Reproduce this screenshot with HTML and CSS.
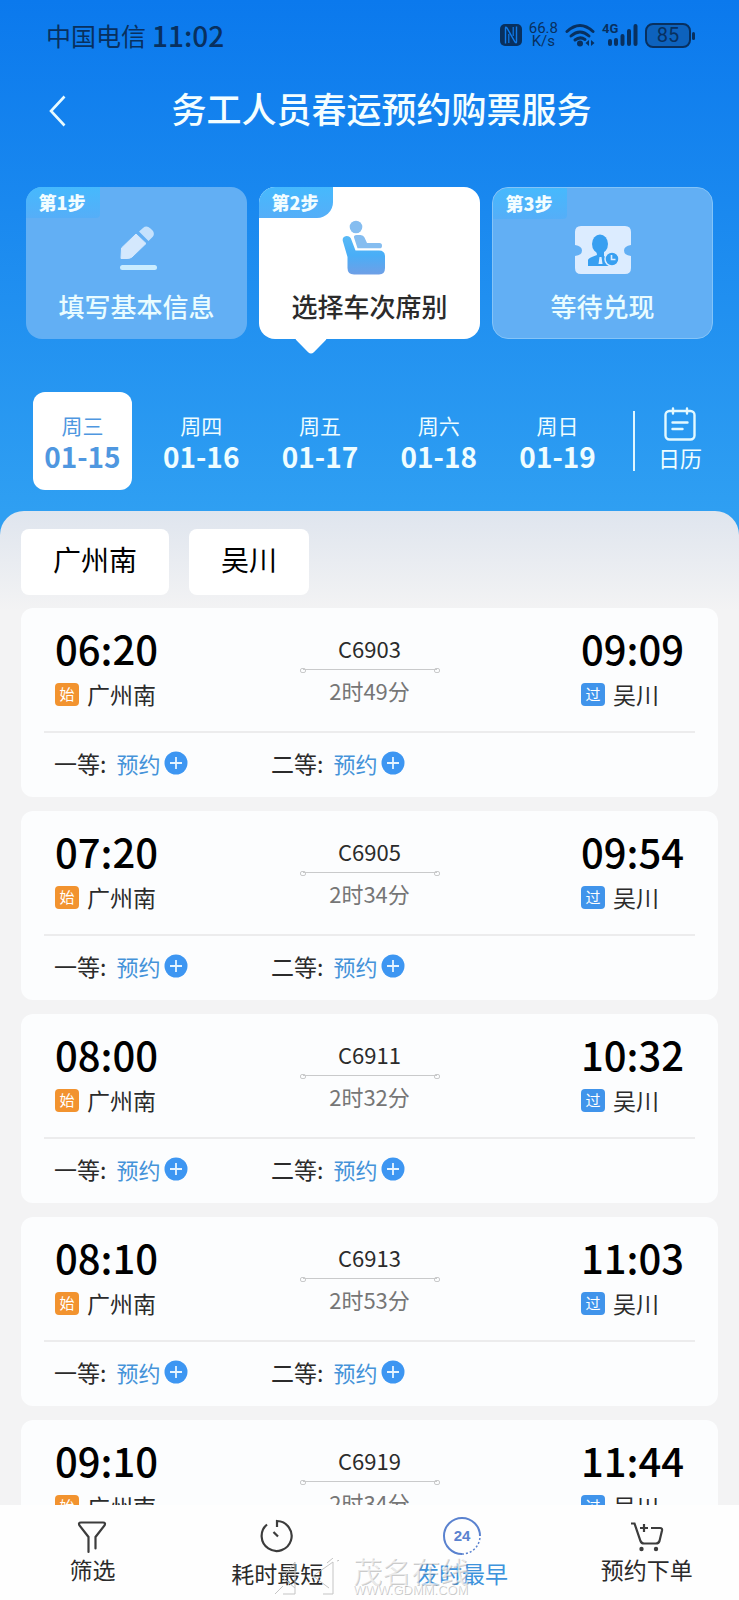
FILE: index.html
```html
<!DOCTYPE html>
<html lang="zh-CN">
<head>
<meta charset="UTF-8">
<meta name="viewport" content="width=device-width, initial-scale=1.0">
<title>务工人员春运预约购票服务</title>
<link rel="stylesheet" href="styles.css">
</head>
<body>
<header class="top">
    <div class="status-bar">
        <div class="status-left">
            <span class="carrier">中国电信</span>
            <span class="clock">11:02</span>
        </div>
        <div class="status-right">
            <svg width="22" height="22" viewBox="0 0 22 22">
                <rect x="0" y="0" width="22" height="22" rx="5" fill="#08305f"/>
                <path d="M5.500 19.500V4Q5.500 2.500 7 4L15 18Q16.500 19.500 16.500 18V2.500" fill="none" stroke="#0f7bec" stroke-width="1.400"/>
                <path d="M8.800 10V19M13.200 3V12" fill="none" stroke="#0f7bec" stroke-width="1.200"/>
            </svg>
            <div class="speed"><span>66.8</span><span>K/s</span></div>
            <svg width="30" height="24" viewBox="0 0 30 24">
                <g fill="none" stroke="#08305f" stroke-width="3" stroke-linecap="round">
                    <path d="M2 8.500Q15 -3.500 28 8.500"/>
                    <path d="M6 13Q15 5 24 13"/>
                    <path d="M10 17Q15 13 20 16.500"/>
                </g>
                <circle cx="15" cy="20.500" r="3" fill="#08305f"/>
                <path d="M24 17v6l-3.500-3zM26 17v6l3.500-3z" fill="#08305f"/>
            </svg>
            <div class="signal">
                <span class="net">4G</span>
                <svg width="36" height="24" viewBox="0 0 36 24">
                    <path d="M8 18v3M14 17v4M20.500 13v8M27 8v13M33.500 3v18" fill="none" stroke="#08305f" stroke-width="4" stroke-linecap="round"/>
                </svg>
            </div>
            <div class="battery"><span>85</span></div>
        </div>
    </div>

    <div class="title-bar">
        <a href="#" class="back" aria-label="返回">
            <svg width="18" height="32" viewBox="0 0 18 32"><path d="M16.500 1.500L3 16L16.500 30.500" fill="none" stroke="#e8fbff" stroke-width="2.600"/></svg>
        </a>
        <h1>务工人员春运预约购票服务</h1>
    </div>

    <div class="steps">
        <div class="step">
            <span class="step-tag">第1步</span>
            <svg width="60" height="54" viewBox="0 0 60 54">
                <path d="M14 35.500L14.500 25L29 11L39 20.500L25 34Q23 35.500 20 35.500Z" fill="#d4e8fd" stroke="#d4e8fd" stroke-linejoin="round"/>
                <path d="M32 8.500L36 5Q39.500 2 43.500 5.500Q48.500 9.500 46 13.500L41.500 18Z" fill="#c5e2fd"/>
                <rect x="13" y="42" width="37" height="5" rx="2.500" fill="#c9ecff"/>
            </svg>
            <span class="step-name">填写基本信息</span>
        </div>
        <div class="step active">
            <span class="step-tag">第2步</span>
            <svg class="seat-icon" width="60" height="54" viewBox="0 0 60 54">
                <defs>
                    <linearGradient id="seat" x1="0" y1="0" x2="0" y2="1">
                        <stop offset="0" stop-color="#58b9f6"/>
                        <stop offset=".5" stop-color="#49aef7"/>
                        <stop offset="1" stop-color="#6f9fe6"/>
                    </linearGradient>
                </defs>
                <circle cx="16" cy="4" r="6.300" fill="#85bdf0"/>
                <path d="M14 14.500Q13.500 12 16.500 12H20.500Q23.500 12 24.500 14.500L27 20H39.500Q42 20 42 22.700Q42 25.300 39.500 25.300H17.500Z" fill="#85bdf0"/>
                <path d="M2.800 18Q2 13.500 6.500 13Q10.500 13 11.500 17L15.500 27.500H39Q45 27.500 45 33.500V45Q45 51.500 39 51.500H14Q7.500 51.500 7.500 45V34Z" fill="url(#seat)"/>
            </svg>
            <span class="step-name">选择车次席别</span>
        </div>
        <div class="step outlined">
            <span class="step-tag">第3步</span>
            <svg width="60" height="54" viewBox="0 0 60 54">
                <path d="M8 3H52Q58 3 58 9V22Q51 23 51 27.500Q51 32 58 33V45Q58 51 52 51H8Q2 51 2 45V33Q9 32 9 27.500Q9 23 2 22V9Q2 3 8 3Z" fill="#dcecff"/>
                <ellipse cx="27" cy="21" rx="8" ry="9.500" fill="#379ff1"/>
                <path d="M23.500 29H31V33L41 39V43H15V37Q15 35 24 32Z" fill="#379ff1"/>
                <path d="M26.500 34h2l1 7h-4z" fill="#dcecff"/>
                <circle cx="39" cy="36" r="7" fill="#379ff1" stroke="#dcecff" stroke-width="1.500"/>
                <path d="M38.500 32v4.500h4" fill="none" stroke="#dcecff" stroke-width="1.600"/>
            </svg>
            <span class="step-name">等待兑现</span>
        </div>
    </div>

    <div class="date-bar">
        <div class="dates">
            <button class="date selected"><span>周三</span><b>01-15</b></button>
            <button class="date"><span>周四</span><b>01-16</b></button>
            <button class="date"><span>周五</span><b>01-17</b></button>
            <button class="date"><span>周六</span><b>01-18</b></button>
            <button class="date"><span>周日</span><b>01-19</b></button>
        </div>
        <button class="calendar">
            <svg width="32" height="34" viewBox="0 0 32 34">
                <g fill="none" stroke="#e3f9ff" stroke-width="2.400" stroke-linecap="round">
                    <rect x="1.500" y="4" width="29" height="28.500" rx="4"/>
                    <path d="M9 1.500v5M23 1.500v5M8.500 15.500h15M8.500 22h10"/>
                </g>
            </svg>
            <span>日历</span>
        </button>
    </div>
</header>

<main class="panel">
    <div class="stations">
        <button>广州南</button>
        <button>吴川</button>
    </div>
    <div id="train-list" class="train-list"></div>
</main>

<nav class="tab-bar">
    <button class="tab">
        <svg width="38" height="38" viewBox="0 0 38 38">
            <path d="M15.500 35V20L6.500 8.500Q5 5.500 8 5.500H30Q33 5.500 31.500 8.500L22.500 20V31.500" fill="none" stroke="#3c3c3c" stroke-width="2.200" stroke-linecap="round"/>
        </svg>
        <span>筛选</span>
    </button>
    <button class="tab low">
        <svg width="38" height="38" viewBox="0 0 38 38">
            <path d="M19 10V4A15 15 0 1 1 9 7.500M15.500 15L20 19.500" fill="none" stroke="#3c3c3c" stroke-width="2.200"/>
        </svg>
        <span>耗时最短</span>
    </button>
    <button class="tab low current">
        <svg width="38" height="38" viewBox="0 0 38 38">
            <path d="M37 19A18 18 0 1 0 19 37" fill="none" stroke="#5a82cf" stroke-width="2"/>
            <path d="M19 37A18 18 0 0 0 37 19" fill="none" stroke="#5a82cf" stroke-width="1.500" stroke-dasharray="2 2"/>
            <text x="19" y="24" text-anchor="middle" class="tab-24">24</text>
        </svg>
        <span>发时最早</span>
    </button>
    <button class="tab">
        <svg width="38" height="38" viewBox="0 0 38 38">
            <path d="M3 6.500H6.500L12.500 24Q13.500 26.500 16 26.500H28Q30.500 26.500 31.500 24L34 13.500Q34.500 11 32 11H23M12 11h8M16 7v8" fill="none" stroke="#3c3c3c" stroke-width="2.200"/>
            <circle cx="13.500" cy="32" r="2.200" fill="#3c3c3c"/>
            <circle cx="28" cy="32" r="2.200" fill="#3c3c3c"/>
        </svg>
        <span>预约下单</span>
    </button>
    <div class="watermark">
        <svg width="68" height="38" viewBox="0 0 68 38">
            <path d="M4 36L12 28M12 36H24V4L12 20L24 30M42 18L62 4V36H52M42 18L58 30M56 5L62 0M66 3l6-2" fill="none" stroke="#c4c4c4" stroke-width="1"/>
        </svg>
        <div class="watermark-text"><span>茂名在线</span><small>WWW.GDMM.COM</small></div>
    </div>
</nav>

<script>
const trains = [
    { no: 'C6903', start: '06:20', end: '09:09', duration: '2时49分' },
    { no: 'C6905', start: '07:20', end: '09:54', duration: '2时34分' },
    { no: 'C6911', start: '08:00', end: '10:32', duration: '2时32分' },
    { no: 'C6913', start: '08:10', end: '11:03', duration: '2时53分' },
    { no: 'C6919', start: '09:10', end: '11:44', duration: '2时34分' }
];

const plusIcon = '<svg width="24" height="24" viewBox="0 0 24 24"><circle cx="12" cy="12" r="11.500" fill="#3d96f2"/><path d="M6 12h12M12 6v12" stroke="#e6f4ff" stroke-width="1.800"/></svg>';

// One seat class with its booking button
function seat(name) {
    return `<div class="seat"><span>${name}:</span><button><span>预约</span>${plusIcon}</button></div>`;
}

document.getElementById('train-list').innerHTML = trains.map(t => `
    <article class="train">
        <div class="train-main">
            <div class="stop">
                <div class="time">${t.start}</div>
                <div class="station"><i class="badge start">始</i>广州南</div>
            </div>
            <div class="trip">
                <div class="train-no">${t.no}</div>
                <div class="line"></div>
                <div class="duration">${t.duration}</div>
            </div>
            <div class="stop">
                <div class="time">${t.end}</div>
                <div class="station"><i class="badge pass">过</i>吴川</div>
            </div>
        </div>
        <div class="seats">${seat('一等')}${seat('二等')}</div>
    </article>`).join('');
</script>
</body>
</html>
```

FILE: styles.css
```css
* {
    box-sizing: border-box;
}

body {
    margin: 0;
    height: 100vh;
    display: flex;
    flex-direction: column;
    overflow: hidden;
    background: linear-gradient(#0b79ed, #2f9ff2 511px);
    font-family: "Noto Sans CJK SC", sans-serif;
    color: #2b2b2b;
}

button {
    margin: 0;
    padding: 0;
    border: none;
    background: none;
    font-family: inherit;
    color: inherit;
    cursor: pointer;
}

svg {
    display: block;
    flex: none;
}

/* Status bar */
.status-bar {
    display: flex;
    justify-content: space-between;
    align-items: center;
    height: 70px;
    padding: 0 48px 0 46px;
    color: #08305f;
}

.status-left,
.status-right {
    display: flex;
    align-items: center;
}

.status-left {
    gap: 6px;
}

.status-right {
    gap: 7px;
}

.carrier {
    font-size: 25px;
    line-height: 32px;
}

.clock {
    font-size: 28px;
    line-height: 32px;
    font-weight: 500;
}

.speed {
    display: flex;
    flex-direction: column;
    align-items: center;
    font-family: Roboto, sans-serif;
    font-size: 15px;
    line-height: 13px;
}

.signal {
    position: relative;
}

.net {
    position: absolute;
    left: 0;
    top: 0;
    font-family: Roboto, sans-serif;
    font-size: 13px;
    line-height: 12px;
    font-weight: 700;
}

.battery {
    position: relative;
    width: 46px;
    height: 25px;
    border: 2px solid #08305f;
    border-radius: 8px;
    background: #0d62bd;
    font-family: Roboto, sans-serif;
    font-size: 20px;
    line-height: 21px;
    text-align: center;
}

.battery::after {
    content: "";
    position: absolute;
    right: -6px;
    top: 7px;
    width: 3px;
    height: 8px;
    border-radius: 2px;
    background: #08305f;
}

/* Title */
.title-bar {
    display: flex;
    align-items: center;
    height: 82px;
    padding: 0 48px;
    color: #f4feff;
}

.title-bar h1 {
    flex: 1;
    margin: 0;
    padding: 0 0 6px 6px;
    font-size: 35px;
    line-height: 48px;
    font-weight: 500;
    text-align: center;
}

/* Steps */
.steps {
    display: grid;
    grid-template-columns: repeat(3, 1fr);
    gap: 12px;
    padding: 35px 26px 0;
}

.step {
    position: relative;
    display: flex;
    flex-direction: column;
    align-items: center;
    gap: 13px;
    height: 152px;
    padding-top: 36px;
    border-radius: 16px;
    background: #62aff4;
    color: #e9fcff;
}

.step.outlined {
    border: 1px solid #84c4f8;
    padding-top: 35px;
}

.step.active {
    background: #fff;
    color: #2b2b2b;
}

.step.active::after {
    content: "";
    position: absolute;
    left: 40px;
    bottom: -11px;
    width: 24px;
    height: 24px;
    border-radius: 4px;
    background: #fff;
    transform: rotate(45deg);
}

.seat-icon {
    overflow: visible;
}

.step-tag {
    position: absolute;
    left: 0;
    top: 0;
    width: 74px;
    height: 31px;
    padding-right: 2px;
    border-radius: 16px 0 4px 0;
    background: linear-gradient(#46b9fd, #55aef8);
    color: #f2fdff;
    font-size: 18px;
    line-height: 31px;
    font-weight: 900;
    text-align: center;
}

.active .step-tag {
    border-radius: 16px 0 16px 0;
}

.step-name {
    font-size: 26px;
    line-height: 32px;
    font-weight: 500;
    z-index: 1;
}

/* Dates */
.date-bar {
    display: flex;
    align-items: center;
    padding: 53px 14px 21px 33px;
    color: #effdff;
}

.dates {
    flex: 1;
    display: grid;
    grid-template-columns: repeat(5, 1fr);
    gap: 20px;
    padding-right: 26px;
}

.date {
    display: flex;
    flex-direction: column;
    align-items: center;
    height: 98px;
    padding-top: 18px;
    border-radius: 12px;
}

.date span {
    font-size: 21px;
    line-height: 30px;
}

.date b {
    font-size: 28px;
    line-height: 32px;
    font-weight: 700;
}

.date.selected {
    background: #fff;
    color: #4f97e0;
}

.calendar {
    display: flex;
    flex-direction: column;
    align-items: center;
    width: 92px;
    height: 60px;
    border-left: 2px solid #dff6ff;
    font-size: 22px;
    line-height: 32px;
}

.calendar svg {
    margin-top: -4px;
}

/* Train list */
.panel {
    flex: 1;
    min-height: 0;
    overflow: hidden;
    padding: 18px 21px 0;
    border-radius: 24px 24px 0 0;
    background: linear-gradient(#dfe5ee, #f3f3f4 100px);
}

.stations {
    display: flex;
    gap: 20px;
    margin-bottom: 13px;
}

.stations button {
    height: 66px;
    padding: 0 32px 6px;
    border-radius: 8px;
    background: #fff;
    color: #000;
    font-size: 28px;
    line-height: 40px;
}

.train-list {
    display: flex;
    flex-direction: column;
    gap: 14px;
}

.train {
    border-radius: 12px;
    background: #fcfdfe;
}

.train-main {
    display: flex;
    justify-content: space-between;
    margin: 0 23px;
    padding: 18px 11px 23px;
    border-bottom: 2px solid #ececed;
}

.stop {
    width: 103px;
}

.time {
    color: #000;
    font-size: 40px;
    line-height: 44px;
    font-weight: 500;
}

.station {
    display: flex;
    align-items: center;
    gap: 8px;
    margin-top: 10px;
    font-size: 23px;
    line-height: 28px;
    white-space: nowrap;
}

.badge {
    width: 24px;
    height: 23px;
    border-radius: 4px;
    color: #fff;
    font-size: 15px;
    line-height: 22px;
    font-style: normal;
    text-align: center;
}

.badge.start {
    background: #f2932f;
}

.badge.pass {
    background: #4094eb;
}

.trip {
    width: 140px;
    padding-top: 9px;
    text-align: center;
}

.train-no {
    font-size: 22px;
    line-height: 26px;
}

.line {
    position: relative;
    height: 1px;
    margin: 8px 3px 7px;
    background: #c9cacb;
}

.line::before,
.line::after {
    content: "";
    position: absolute;
    top: -1px;
    width: 4px;
    height: 3px;
    border: 1px solid #c9cacb;
    border-radius: 2px;
}

.line::before {
    left: -3px;
}

.line::after {
    right: -3px;
}

.duration {
    color: #767676;
    font-size: 22px;
    line-height: 26px;
}

.seats {
    display: flex;
    height: 60px;
    margin-bottom: 4px;
    padding-left: 33px;
}

.seat {
    display: flex;
    align-items: center;
    gap: 10px;
    width: 217px;
    font-size: 23px;
    line-height: 28px;
}

.seat button {
    display: flex;
    align-items: center;
    gap: 4px;
    color: #4593d9;
    font-size: 22px;
    line-height: 28px;
}

/* Bottom tabs */
.tab-bar {
    position: relative;
    display: grid;
    grid-template-columns: repeat(4, 1fr);
    height: 95px;
    background: #fefefe;
}

.tab {
    display: flex;
    flex-direction: column;
    align-items: center;
    padding-top: 12px;
    font-size: 23px;
    line-height: 28px;
}

.tab.low svg {
    margin-bottom: 4px;
}

.tab.current {
    color: #3d93dc;
}

.tab-24 {
    fill: #5a82cf;
    font-family: "Liberation Sans", sans-serif;
    font-size: 15px;
    font-weight: 700;
}

.watermark {
    position: absolute;
    left: 271px;
    bottom: 4px;
    display: flex;
    align-items: flex-end;
    gap: 14px;
    pointer-events: none;
}

.watermark-text {
    display: flex;
    flex-direction: column;
    color: rgba(255, 255, 255, 0.6);
    text-shadow: 1px 1px 0 rgba(120, 120, 120, 0.4);
}

.watermark-text span {
    font-size: 29px;
    line-height: 26px;
}

.watermark-text small {
    font-family: "Liberation Sans", sans-serif;
    font-size: 13px;
    line-height: 13px;
}
```
